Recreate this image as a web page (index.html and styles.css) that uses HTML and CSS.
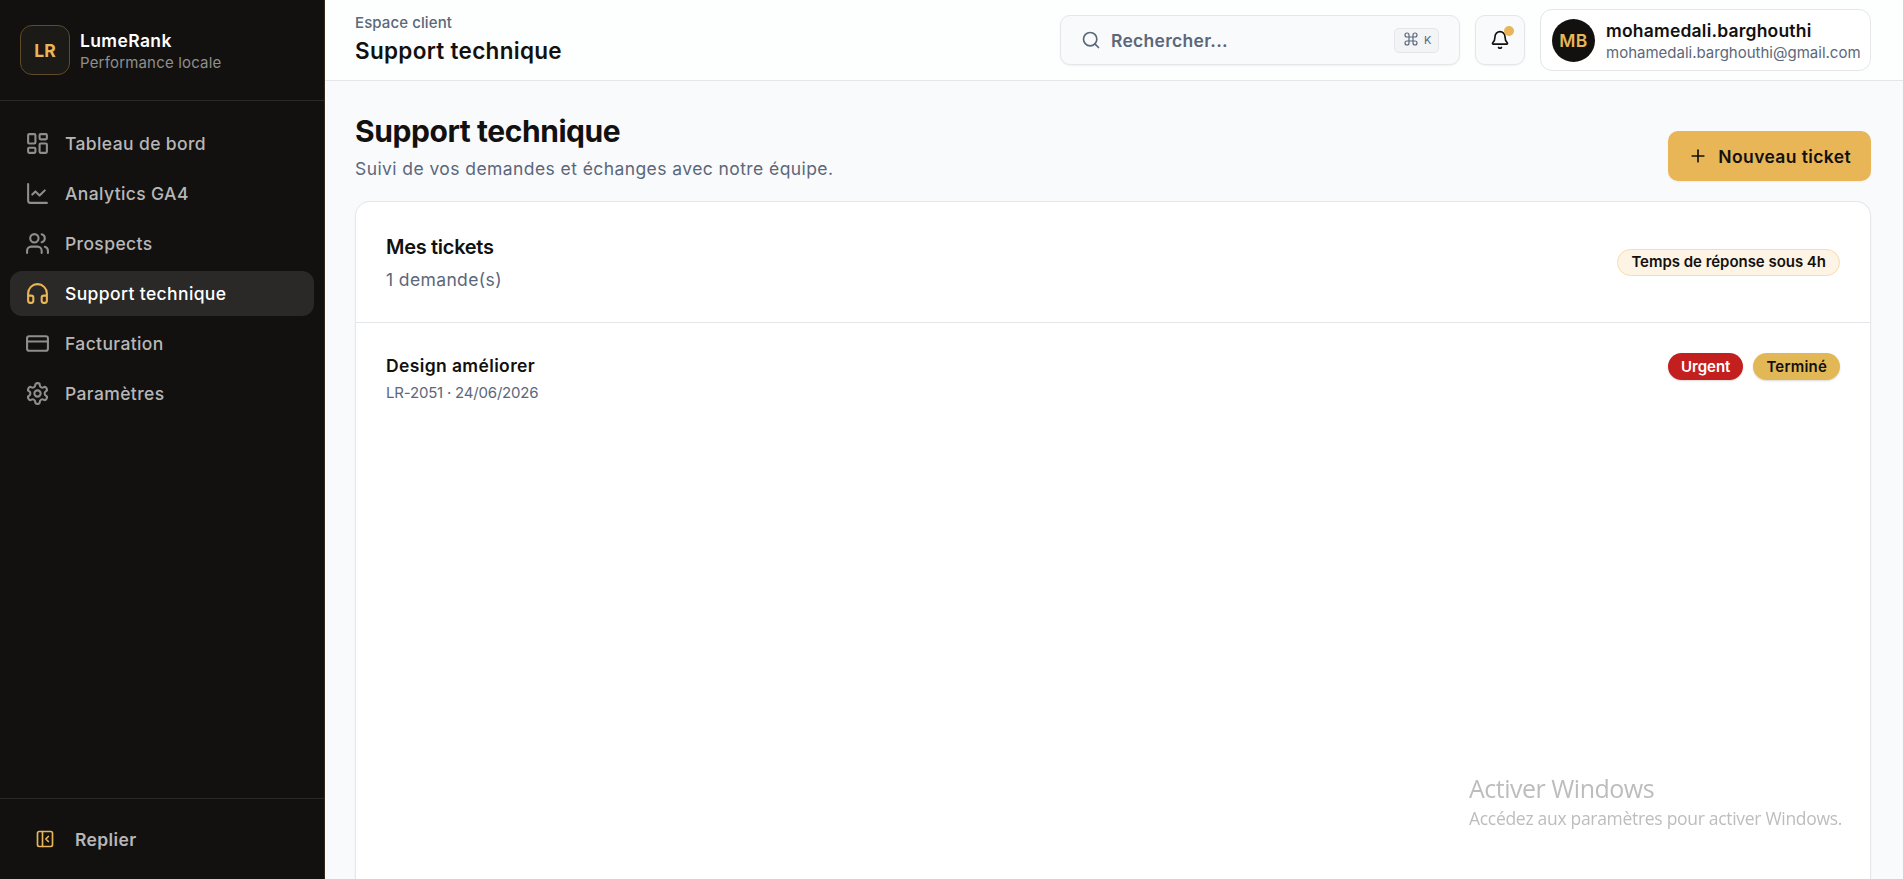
FILE: index.html
```html
<!DOCTYPE html>
<html lang="fr">
<head>
    <meta charset="UTF-8">
    <title>LumeRank - Support technique</title>
    <link rel="stylesheet" href="styles.css">
</head>
<body>
    <div class="app">
        <aside class="sidebar">
            <div class="brand">
                <div class="brand-logo">LR</div>
                <div>
                    <div class="brand-name">LumeRank</div>
                    <div class="brand-tag">Performance locale</div>
                </div>
            </div>

            <nav class="nav">
                <a class="nav-item">
                    <svg viewBox="0 0 24 24"><rect width="7" height="9" x="3" y="3" rx="1"/><rect width="7" height="5" x="14" y="3" rx="1"/><rect width="7" height="9" x="14" y="12" rx="1"/><rect width="7" height="5" x="3" y="16" rx="1"/></svg>
                    <span>Tableau de bord</span>
                </a>
                <a class="nav-item">
                    <svg viewBox="0 0 24 24"><path d="M3 3v16a2 2 0 0 0 2 2h16"/><path d="m19 9-5 5-4-4-3 3"/></svg>
                    <span>Analytics GA4</span>
                </a>
                <a class="nav-item">
                    <svg viewBox="0 0 24 24"><path d="M16 21v-2a4 4 0 0 0-4-4H6a4 4 0 0 0-4 4v2"/><circle cx="9" cy="7" r="4"/><path d="M22 21v-2a4 4 0 0 0-3-3.87"/><path d="M16 3.13a4 4 0 0 1 0 7.75"/></svg>
                    <span>Prospects</span>
                </a>
                <a class="nav-item active">
                    <svg viewBox="0 0 24 24"><path d="M3 14h3a2 2 0 0 1 2 2v3a2 2 0 0 1-2 2H5a2 2 0 0 1-2-2v-7a9 9 0 0 1 18 0v7a2 2 0 0 1-2 2h-1a2 2 0 0 1-2-2v-3a2 2 0 0 1 2-2h3"/></svg>
                    <span>Support technique</span>
                </a>
                <a class="nav-item">
                    <svg viewBox="0 0 24 24"><rect width="20" height="14" x="2" y="5" rx="2"/><path d="M2 10h20"/></svg>
                    <span>Facturation</span>
                </a>
                <a class="nav-item">
                    <svg viewBox="0 0 24 24"><path d="M12.22 2h-.44a2 2 0 0 0-2 2v.18a2 2 0 0 1-1 1.73l-.43.25a2 2 0 0 1-2 0l-.15-.08a2 2 0 0 0-2.73.73l-.22.38a2 2 0 0 0 .73 2.73l.15.1a2 2 0 0 1 1 1.72v.51a2 2 0 0 1-1 1.74l-.15.09a2 2 0 0 0-.73 2.73l.22.38a2 2 0 0 0 2.73.73l.15-.08a2 2 0 0 1 2 0l.43.25a2 2 0 0 1 1 1.73V20a2 2 0 0 0 2 2h.44a2 2 0 0 0 2-2v-.18a2 2 0 0 1 1-1.73l.43-.25a2 2 0 0 1 2 0l.15.08a2 2 0 0 0 2.73-.73l.22-.39a2 2 0 0 0-.73-2.73l-.15-.08a2 2 0 0 1-1-1.74v-.5a2 2 0 0 1 1-1.74l.15-.09a2 2 0 0 0 .73-2.73l-.22-.38a2 2 0 0 0-2.73-.73l-.15.08a2 2 0 0 1-2 0l-.43-.25a2 2 0 0 1-1-1.73V4a2 2 0 0 0-2-2z"/><circle cx="12" cy="12" r="3"/></svg>
                    <span>Paramètres</span>
                </a>
            </nav>

            <div class="sidebar-footer">
                <button class="collapse">
                    <svg viewBox="0 0 24 24"><rect width="18" height="18" x="3" y="3" rx="2"/><path d="M9 3v18"/><path d="m16 15-3-3 3-3"/></svg>
                    <span>Replier</span>
                </button>
            </div>
        </aside>

        <div class="main">
            <header class="topbar">
                <div>
                    <div class="crumb-label">Espace client</div>
                    <div class="crumb-title">Support technique</div>
                </div>
                <div class="topbar-actions">
                    <button class="search">
                        <svg viewBox="0 0 24 24"><circle cx="11" cy="11" r="8"/><path d="m21 21-4.3-4.3"/></svg>
                        <span>Rechercher...</span>
                        <kbd>
                            <svg viewBox="0 0 24 24"><path d="M15 6v12a3 3 0 1 0 3-3H6a3 3 0 1 0 3 3V6a3 3 0 1 0-3 3h12a3 3 0 1 0-3-3"/></svg>
                            K
                        </kbd>
                    </button>
                    <button class="bell">
                        <svg viewBox="0 0 24 24"><path d="M10.3 21a2 2 0 0 0 3.4 0"/><path d="M3.3 15.3A1 1 0 0 0 4 17h16a1 1 0 0 0 .7-1.7C19.4 14 18 12.5 18 8A6 6 0 0 0 6 8c0 4.5-1.4 6-2.7 7.3"/></svg>
                        <span class="dot"></span>
                    </button>
                    <div class="user">
                        <div class="avatar">MB</div>
                        <div>
                            <div class="user-name">mohamedali.barghouthi</div>
                            <div class="user-mail">mohamedali.barghouthi@gmail.com</div>
                        </div>
                    </div>
                </div>
            </header>

            <main class="content">
                <div class="page-head">
                    <div>
                        <h1>Support technique</h1>
                        <p>Suivi de vos demandes et échanges avec notre équipe.</p>
                    </div>
                    <button class="new-ticket">
                        <svg viewBox="0 0 24 24"><path d="M5 12h14"/><path d="M12 5v14"/></svg>
                        <span>Nouveau ticket</span>
                    </button>
                </div>

                <section class="card">
                    <div class="card-head">
                        <div>
                            <h2>Mes tickets</h2>
                            <p>1 demande(s)</p>
                        </div>
                        <span class="badge badge-soft">Temps de réponse sous 4h</span>
                    </div>
                    <div class="ticket">
                        <div>
                            <div class="ticket-title">Design améliorer</div>
                            <div class="ticket-meta">LR-2051 · 24/06/2026</div>
                        </div>
                        <div class="badges">
                            <span class="badge badge-urgent">Urgent</span>
                            <span class="badge badge-done">Terminé</span>
                        </div>
                    </div>
                </section>
            </main>
        </div>
    </div>

    <div class="watermark">
        <div class="watermark-title">Activer Windows</div>
        <div class="watermark-text">Accédez aux paramètres pour activer Windows.</div>
    </div>
</body>
</html>
```
FILE: styles.css
```css
* {
    box-sizing: border-box;
}
body {
    margin: 0;
    font-family: Inter, "Liberation Sans", sans-serif;
    font-size: 17.5px;
    line-height: 25px;
    letter-spacing: 0.38px;
    color: #12110f;
    background-color: #f9fafc;
    overflow: hidden;
}
h1, h2, p {
    margin: 0;
}
button {
    font: inherit;
    letter-spacing: inherit;
    color: inherit;
    border: none;
    padding: 0;
    cursor: pointer;
}
svg {
    width: 20px;
    height: 20px;
    flex-shrink: 0;
    fill: none;
    stroke: currentColor;
    stroke-width: 2;
    stroke-linecap: round;
    stroke-linejoin: round;
}
.app {
    display: flex;
    height: 100vh;
}

/* Sidebar */
.sidebar {
    width: 325px;
    flex-shrink: 0;
    display: flex;
    flex-direction: column;
    background-color: #12110f;
    border-right: 1px solid #35291a;
}
.brand {
    display: flex;
    align-items: center;
    gap: 10px;
    height: 101px;
    padding: 0 20px;
    border-bottom: 1px solid #2a2928;
}
.brand-logo {
    width: 50px;
    height: 50px;
    display: flex;
    align-items: center;
    justify-content: center;
    border: 1px solid #5f4a29;
    border-radius: 12px;
    background-color: #1b1a16;
    color: #e8b557;
    font-weight: 700;
    letter-spacing: 0;
}
.brand-name {
    color: #fff;
    font-weight: 600;
}
.brand-tag {
    color: #8f8e8d;
    font-size: 15px;
    line-height: 20px;
    letter-spacing: 0.18px;
}
.nav {
    flex: 1;
    display: flex;
    flex-direction: column;
    gap: 5px;
    padding: 20px 10px;
}
.nav-item {
    display: flex;
    align-items: center;
    gap: 15px;
    height: 45px;
    padding: 0 15px;
    border-radius: 12px;
    color: #b8b7b7;
    font-weight: 500;
}
.nav-item svg {
    width: 25px;
    height: 25px;
    color: #8f8e8d;
}
.nav-item.active {
    background-color: #2a2928;
    color: #fff;
}
.nav-item.active svg {
    color: #e8b557;
}
.sidebar-footer {
    padding: 15px;
    border-top: 1px solid #2a2928;
}
.collapse {
    display: flex;
    align-items: center;
    gap: 20px;
    width: 100%;
    height: 50px;
    padding: 0 20px;
    background: none;
    color: #b8b7b7;
    font-weight: 600;
}
.collapse svg {
    color: #e8b557;
}

/* Top bar */
.main {
    flex: 1;
    display: flex;
    flex-direction: column;
    min-width: 0;
}
.topbar {
    display: flex;
    align-items: center;
    justify-content: space-between;
    height: 81px;
    flex-shrink: 0;
    padding: 0 32px 0 30px;
    background-color: #fdfefe;
    border-bottom: 1px solid #e4e6ea;
}
.crumb-label {
    color: #5b677a;
    font-size: 15px;
    font-weight: 500;
    line-height: 20px;
    letter-spacing: 0.1px;
}
.crumb-title {
    font-size: 22.5px;
    font-weight: 600;
    line-height: 35px;
    letter-spacing: 0.3px;
}
.topbar-actions {
    display: flex;
    align-items: center;
    gap: 15px;
}
.search,
.bell {
    height: 50px;
    display: flex;
    align-items: center;
    border: 1px solid #e4e6ea;
    border-radius: 10px;
    background-color: #f9fafc;
    box-shadow: 0 1px 2px rgba(0,0,0,0.05);
}
.search {
    width: 400px;
    gap: 10px;
    padding: 0 20px;
    color: #5b677a;
    font-weight: 600;
    letter-spacing: 0.28px;
}
kbd {
    display: flex;
    align-items: center;
    gap: 5px;
    height: 25px;
    width: 45px;
    margin-left: auto;
    padding-left: 8px;
    border: 1px solid #e4e6ea;
    border-radius: 5px;
    background-color: #f3f4f6;
    font-family: inherit;
    font-size: 11px;
    font-weight: 400;
}
kbd svg {
    width: 16px;
    height: 16px;
    margin-bottom: 3px;
    stroke-width: 1.75;
}
.bell {
    position: relative;
    width: 50px;
    justify-content: center;
}
.dot {
    position: absolute;
    top: 10px;
    right: 10px;
    width: 10px;
    height: 10px;
    border-radius: 50%;
    background-color: #e8b557;
}
.user {
    display: flex;
    align-items: center;
    gap: 11px;
    width: 331px;
    height: 62px;
    padding: 0 11px;
    border: 1px solid #e4e6ea;
    border-radius: 12px;
    background-color: #fff;
}
.avatar {
    width: 43px;
    height: 43px;
    flex-shrink: 0;
    border-radius: 50%;
    display: flex;
    align-items: center;
    justify-content: center;
    background-color: #12110f;
    color: #e8b557;
    font-weight: 600;
}
.user-name {
    font-weight: 600;
    letter-spacing: 0.2px;
}
.user-mail {
    color: #5b677a;
    font-size: 15px;
    line-height: 20px;
    letter-spacing: 0;
}

/* Page content */
.content {
    flex: 1;
    display: flex;
    flex-direction: column;
    padding: 30px 32px 0 30px;
    min-height: 0;
}
.page-head {
    display: flex;
    align-items: flex-end;
    justify-content: space-between;
    margin-bottom: 20px;
}
.page-head h1 {
    font-size: 30px;
    font-weight: 700;
    line-height: 40px;
    letter-spacing: -0.43px;
}
.page-head p {
    color: #5b677a;
    margin-top: 5px;
    letter-spacing: 0.42px;
}
.new-ticket {
    display: flex;
    align-items: center;
    gap: 10px;
    height: 50px;
    padding: 0 20px;
    border-radius: 10px;
    background-color: #e8b557;
    font-weight: 600;
    box-shadow: 0 1px 2px rgba(0,0,0,0.05);
}
.card {
    flex: 1;
    border: 1px solid #e4e6ea;
    border-bottom: none;
    border-radius: 15px 15px 0 0;
    background-color: #fff;
    box-shadow: 0 1px 2px rgba(0,0,0,0.05);
}
.card-head {
    display: flex;
    align-items: center;
    justify-content: space-between;
    height: 121px;
    padding: 0 30px;
    border-bottom: 1px solid #e4e6ea;
}
.card-head h2 {
    font-size: 20px;
    font-weight: 600;
    line-height: 30px;
    letter-spacing: -0.3px;
    margin-bottom: 5px;
}
.card-head p {
    color: #5b677a;
}
.badge {
    display: flex;
    align-items: center;
    height: 27px;
    padding: 0 13px;
    border-radius: 14px;
    font-size: 15px;
    font-weight: 600;
    letter-spacing: 0;
}
.badge-soft {
    padding-bottom: 2px;
    border: 1px solid #f6dcae;
    background-color: #fdf4e6;
    letter-spacing: -0.03px;
}
.badge-urgent {
    background-color: #c41f1f;
    color: #fff;
    box-shadow: 0 1px 2px rgba(0,0,0,0.15);
}
.badge-done {
    background-color: #e2b857;
    box-shadow: 0 1px 2px rgba(0,0,0,0.15);
    letter-spacing: 0.2px;
}
.ticket {
    display: flex;
    justify-content: space-between;
    padding: 30px;
}
.ticket-title {
    font-weight: 600;
}
.ticket-meta {
    color: #5b677a;
    font-size: 15px;
    line-height: 20px;
    letter-spacing: -0.2px;
    margin-top: 5px;
}
.badges {
    display: flex;
    gap: 10px;
}

/* Activation notice over the page */
.watermark {
    position: fixed;
    left: 1469px;
    top: 771px;
    font-family: "Open Sans", "Noto Sans", sans-serif;
    color: #bdbdbd;
    white-space: nowrap;
}
.watermark-title {
    font-size: 25px;
    line-height: 34px;
    letter-spacing: -0.5px;
}
.watermark-text {
    font-size: 17.5px;
    line-height: 26px;
    letter-spacing: -0.3px;
}
```
